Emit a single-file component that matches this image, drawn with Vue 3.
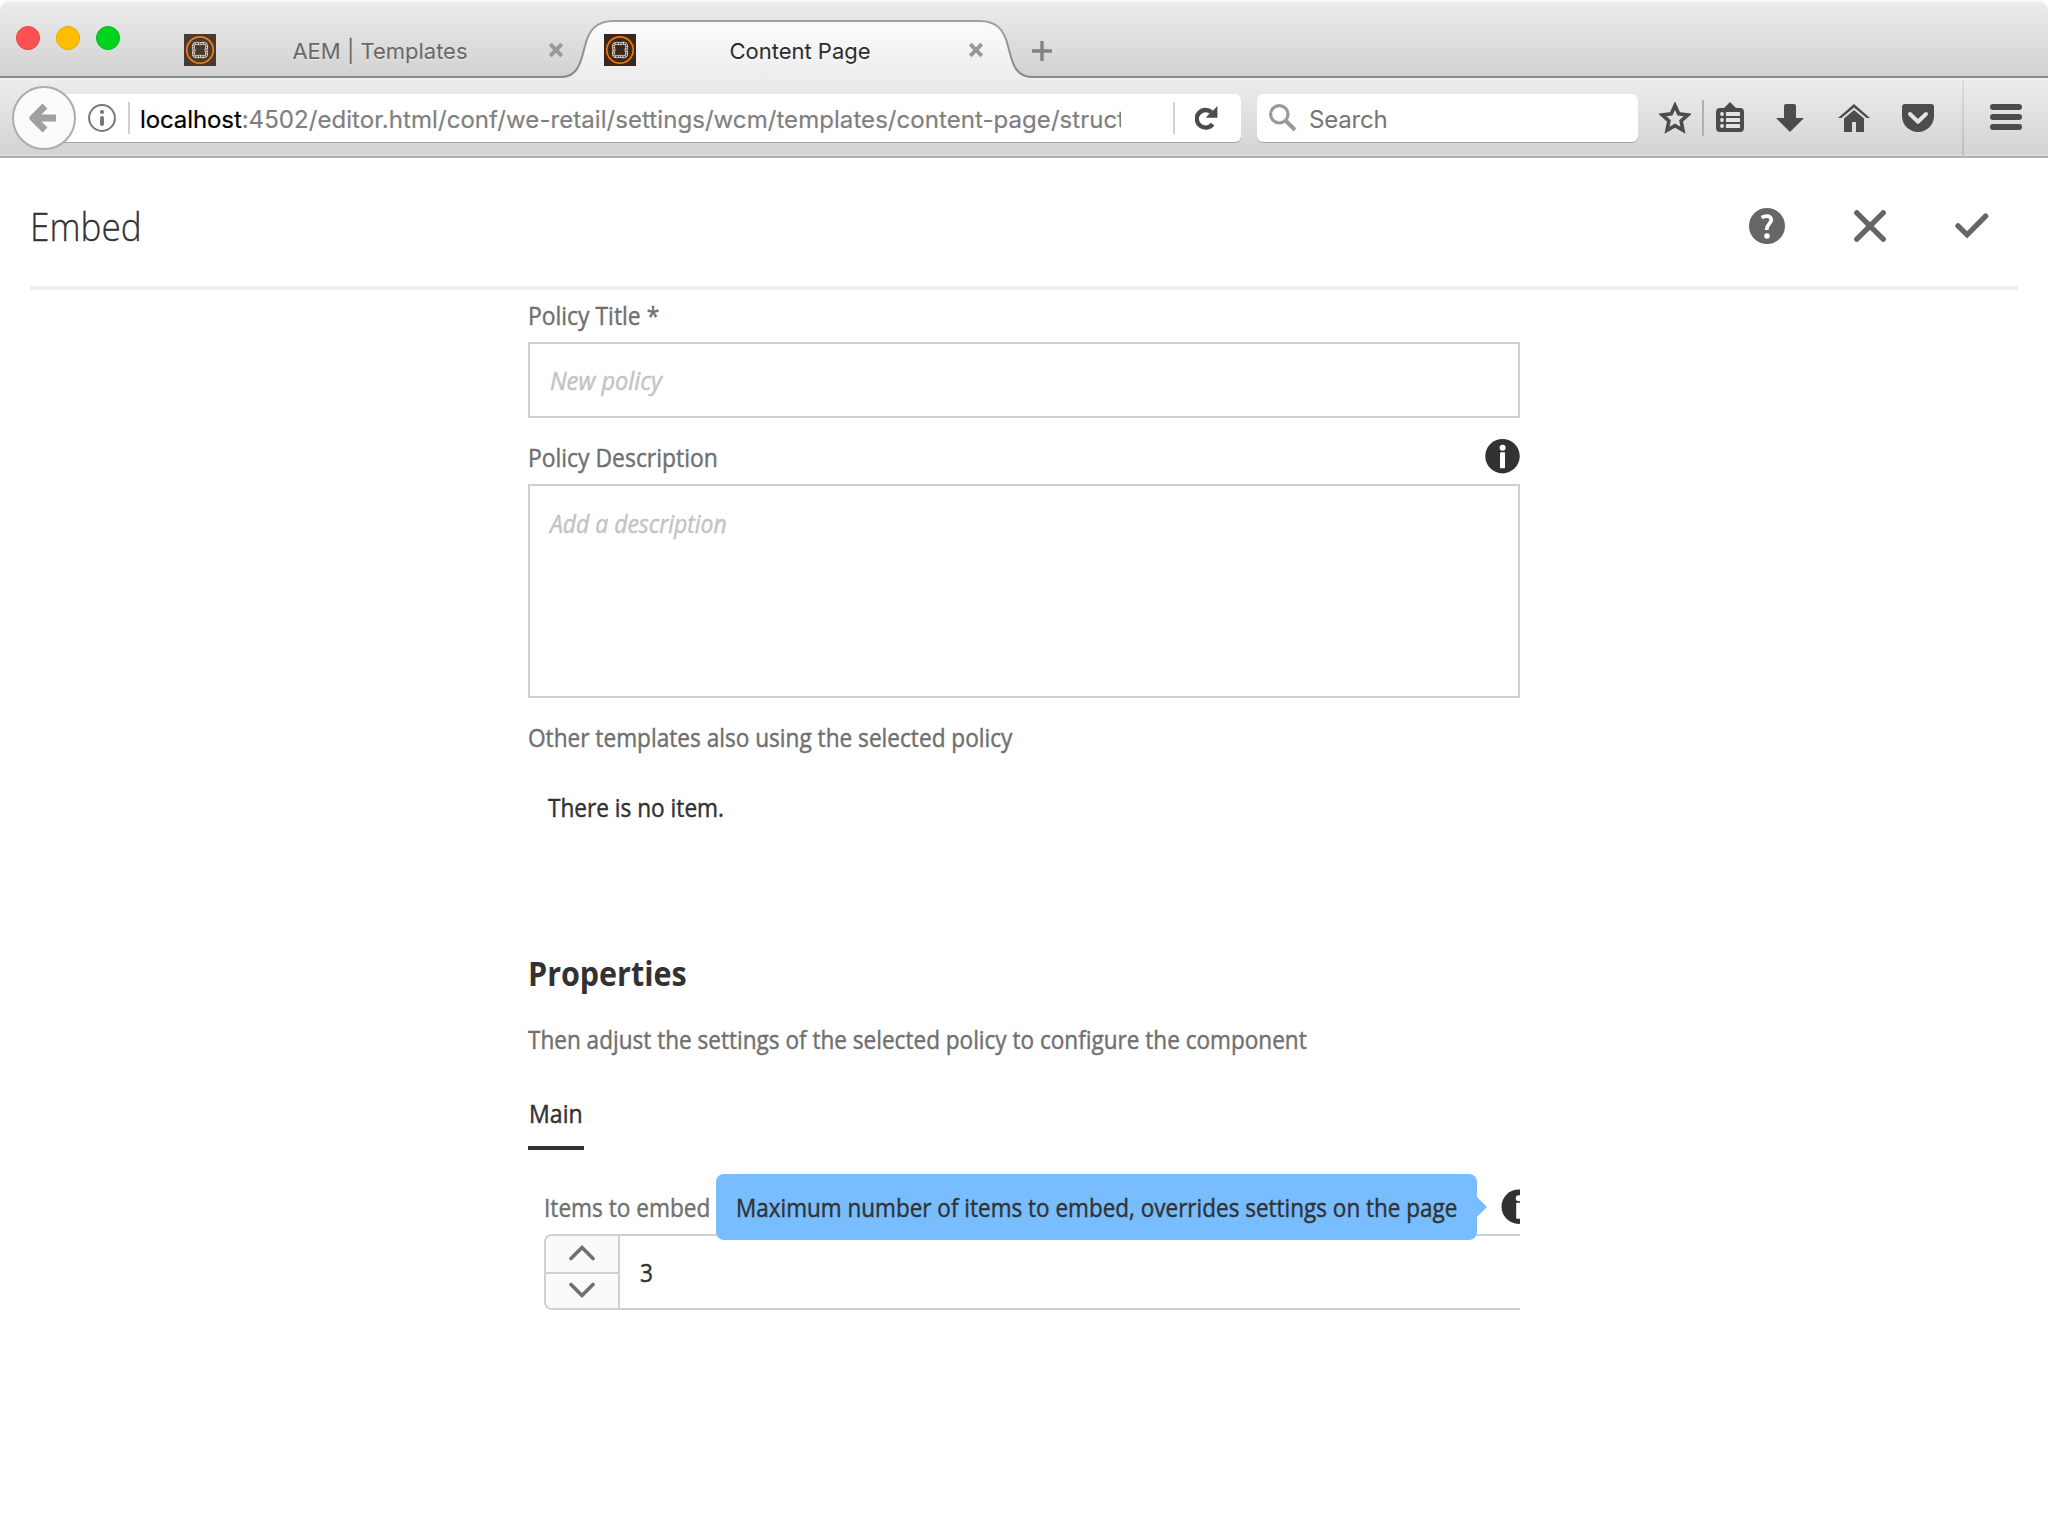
<script setup>
const tabs = [
  { title: 'AEM | Templates', active: false },
  { title: 'Content Page', active: true },
]
const url = {
  host: 'localhost',
  path: ':4502/editor.html/conf/we-retail/settings/wcm/templates/content-page/struct',
}
</script>

<template>
  <div class="window">
    <div class="tabbar">
      <div class="lights">
        <i class="light close-light"></i>
        <i class="light min-light"></i>
        <i class="light max-light"></i>
      </div>
      <div v-for="tab in tabs" :key="tab.title" class="tab" :class="{ active: tab.active }">
        <svg v-if="tab.active" class="tab-shape" width="471" height="60" viewBox="0 20 471 60">
          <defs>
            <linearGradient id="tabFill" x1="0" y1="0" x2="0" y2="1">
              <stop offset="0" stop-color="#fcfcfc" />
              <stop offset="1" stop-color="#ececec" />
            </linearGradient>
            <linearGradient id="tabEdge" x1="0" y1="0" x2="0" y2="1">
              <stop offset="0" stop-color="#a0a0a0" />
              <stop offset="1" stop-color="#858585" />
            </linearGradient>
          </defs>
          <path d="M0 80V77C18 77 20 60 24 46C28 29 36 21 53 21H418C435 21 443 29 447 46C451 60 453 77 471 77V80Z" fill="url(#tabFill)" />
          <path d="M0 77C18 77 20 60 24 46C28 29 36 21 53 21H418C435 21 443 29 447 46C451 60 453 77 471 77" fill="none" stroke="url(#tabEdge)" stroke-width="2" />
        </svg>
        <svg class="favicon" width="32" height="32" viewBox="0 0 32 32">
          <rect width="32" height="32" fill="#3a281c" />
          <circle cx="16" cy="16" r="13.2" fill="none" stroke="#f47500" stroke-width="1.7" />
          <path d="M12.5 9.2Q16 10.4 19.5 9.2Q23 9.6 22.6 13Q21.4 16 22.6 19Q23 22.4 19.5 22.8Q16 21.6 12.5 22.8Q9 22.4 9.4 19Q10.6 16 9.4 13Q9 9.6 12.5 9.2Z" fill="none" stroke="#e8d8cc" stroke-width="3" stroke-linejoin="round" />
          <path d="M12.5 9.2Q16 10.4 19.5 9.2Q23 9.6 22.6 13Q21.4 16 22.6 19Q23 22.4 19.5 22.8Q16 21.6 12.5 22.8Q9 22.4 9.4 19Q10.6 16 9.4 13Q9 9.6 12.5 9.2Z" fill="none" stroke="#4a382c" stroke-width="1.4" stroke-dasharray="1.6 .9" />
        </svg>
        <span class="tab-title">{{ tab.title }}</span>
        <svg class="tab-close" width="16" height="16" viewBox="0 0 16 16">
          <path d="M2.2 2.2L13.8 13.8M13.8 2.2L2.2 13.8" stroke="#999" stroke-width="4" />
        </svg>
      </div>
      <svg class="new-tab" width="20" height="20" viewBox="0 0 20 20">
        <path d="M10 0V20M0 10H20" stroke="#828282" stroke-width="3.4" />
      </svg>
    </div>

    <div class="toolbar">
      <div class="back">
        <svg width="28" height="30" viewBox="0 0 28 30">
          <path d="M16 3L4 15L16 27M5 15H27" fill="none" stroke="#a0a0a0" stroke-width="7" stroke-linejoin="round" />
        </svg>
      </div>
      <div class="urlbar">
        <svg width="28" height="28" viewBox="0 0 28 28">
          <circle cx="14" cy="14" r="12.9" fill="none" stroke="#777" stroke-width="2" />
          <circle cx="14" cy="8" r="2.1" fill="#777" />
          <rect x="12" y="12" width="4" height="10" rx="2" fill="#777" />
        </svg>
        <i class="field-line first"></i>
        <div class="address"><span class="host">{{ url.host }}</span>{{ url.path }}</div>
        <i class="field-line last"></i>
        <svg class="reload" width="23" height="24" viewBox="0 0 23 24">
          <path d="M17.6 18.2A8.8 8.8 0 1 1 16.6 6.4" fill="none" stroke="#4c4c4c" stroke-width="4.4" />
          <path d="M22.4 0V11.8H10.8L13.5 8.6L16 6.8Z" fill="#4c4c4c" />
        </svg>
      </div>
      <div class="search">
        <svg width="28" height="28" viewBox="0 0 28 28">
          <circle cx="10.3" cy="10.3" r="8.7" fill="none" stroke="#999" stroke-width="3.2" />
          <path d="M16.5 16.5L26 26" stroke="#999" stroke-width="4" />
        </svg>
        <span>Search</span>
      </div>
      <svg class="star" width="32" height="32" viewBox="0 0 32 32">
        <path d="M16 3.6L19.7 11.8L28.8 12.9L22.1 19L24 28.2L16 23.6L8 28.2L9.9 19L3.2 12.9L12.3 11.8Z" fill="none" stroke="#4c4c4c" stroke-width="3.6" />
      </svg>
      <i class="tool-line"></i>
      <svg class="clip" width="28" height="30" viewBox="0 0 28 30">
        <path d="M4 6H8L14 0L20 6H24A4 4 0 0 1 28 10V26A4 4 0 0 1 24 30H4A4 4 0 0 1 0 26V10A4 4 0 0 1 4 6Z" fill="#4c4c4c" />
        <g fill="#e4e4e4">
          <circle cx="6" cy="12" r="1.9" /><circle cx="6" cy="18" r="1.9" /><circle cx="6" cy="24" r="1.9" />
          <rect x="10" y="10" width="14" height="4" rx=".6" /><rect x="10" y="16" width="14" height="4" rx=".6" /><rect x="10" y="22" width="14" height="4" rx=".6" />
        </g>
      </svg>
      <svg class="down" width="28" height="28" viewBox="0 0 28 28">
        <path d="M8 2A2 2 0 0 1 10 0H18A2 2 0 0 1 20 2V14H28L14 28L0 14H8Z" fill="#4c4c4c" />
      </svg>
      <svg class="home" width="32" height="28" viewBox="0 0 32 28">
        <path d="M16 0L32 14H28.6L16 3.6L3.4 14H0Z" fill="#4c4c4c" />
        <path d="M16 6L26 14.6V28H18V18H14V28H6V14.6Z" fill="#4c4c4c" />
      </svg>
      <svg class="pocket" width="32" height="28" viewBox="0 0 32 28">
        <path d="M3 0H29A3 3 0 0 1 32 3V12A16 16 0 0 1 0 12V3A3 3 0 0 1 3 0Z" fill="#4c4c4c" />
        <path d="M8 10L16 17.7L24 10" fill="none" stroke="#e4e4e4" stroke-width="4" stroke-linecap="round" stroke-linejoin="round" />
      </svg>
      <i class="menu-line"></i>
      <svg class="menu" width="32" height="26" viewBox="0 0 32 26">
        <g fill="#4c4c4c">
          <rect width="32" height="6" rx="3" /><rect y="10" width="32" height="6" rx="3" /><rect y="20" width="32" height="6" rx="3" />
        </g>
      </svg>
    </div>

    <header class="page-header">
      <h1><span>Embed</span></h1>
      <div class="actions">
        <svg width="36" height="36" viewBox="0 0 36 36">
          <circle cx="18" cy="18" r="18" fill="#666" />
          <path d="M12.6 9.6Q15 8.2 17.8 8.2C20.4 8.2 22.3 9.6 22.3 12C22.3 15.8 17.4 16.2 17.6 22" fill="none" stroke="#fff" stroke-width="3.7" />
          <circle cx="18" cy="28" r="2.8" fill="#fff" />
        </svg>
        <svg width="32" height="32" viewBox="0 0 32 32">
          <path d="M2.8 2.8L29.2 29.2M29.2 2.8L2.8 29.2" stroke="#666" stroke-width="5.4" stroke-linecap="round" />
        </svg>
        <svg width="34" height="26" viewBox="0 0 34 26">
          <path d="M3 12.8L12.1 21.8L30.6 3.2" fill="none" stroke="#666" stroke-width="5.4" stroke-linecap="round" />
        </svg>
      </div>
    </header>

    <main class="form">
      <div class="label title-label"><span class="t label-fit">Policy Title *</span></div>
      <div class="input"><span class="t placeholder">New policy</span></div>
      <div class="desc-row">
        <span class="t label-fit">Policy Description</span>
        <svg width="35" height="35" viewBox="0 0 35 35">
          <circle cx="17.5" cy="17.2" r="17.2" fill="#323232" />
          <circle cx="17.6" cy="8.7" r="3" fill="#fff" />
          <rect x="15" y="13.2" width="5" height="16" rx=".8" fill="#fff" />
        </svg>
      </div>
      <div class="textarea"><span class="t placeholder">Add a description</span></div>
      <div class="label others"><span class="t">Other templates also using the selected policy</span></div>
      <div class="no-item"><span class="t">There is no item.</span></div>
      <h2><span>Properties</span></h2>
      <div class="label adjust"><span class="t">Then adjust the settings of the selected policy to configure the component</span></div>
      <div class="tabs"><div class="main-tab"><span class="t">Main</span></div></div>
      <section class="panel">
        <div class="items-row">
          <span class="t">Items to embed</span>
          <svg class="cut-info" width="19" height="35" viewBox="0 0 19 35">
            <circle cx="17.7" cy="17.7" r="17.2" fill="#323232" />
            <circle cx="17.8" cy="9.2" r="3" fill="#fff" />
            <rect x="15.2" y="13.7" width="5" height="16" rx=".8" fill="#fff" />
          </svg>
        </div>
        <div class="number">
          <div class="steps">
            <div class="step up">
              <svg width="26" height="16" viewBox="0 0 26 16"><path d="M2 13.6L13 2.6L24 13.6" fill="none" stroke="#707070" stroke-width="3.6" stroke-linecap="round" /></svg>
            </div>
            <div class="step down-step">
              <svg width="26" height="16" viewBox="0 0 26 16"><path d="M2 2.4L13 13.4L24 2.4" fill="none" stroke="#707070" stroke-width="3.6" stroke-linecap="round" /></svg>
            </div>
          </div>
          <span class="t value">3</span>
        </div>
        <div class="tooltip"><span class="t">Maximum number of items to embed, overrides settings on the page</span></div>
      </section>
    </main>
  </div>
</template>

<style>
html, body { background: #fff; overflow: hidden; }
</style>

<style scoped>
* { box-sizing: border-box; }
svg { display: block; flex: none; }
i { display: block; flex: none; }
.window { width: 2048px; height: 1536px; overflow: hidden; background: #fff; font-family: "Open Sans", "Noto Sans", sans-serif; }

/* browser tabs */
.tabbar {
  display: flex; align-items: center; height: 78px; padding: 22px 0 0 16px;
  background: linear-gradient(#ececec, #d2d2d2); border-bottom: 2px solid #8a8a8a;
  box-shadow: inset 0 2px #f6f6f6; border-radius: 9px 9px 0 0;
  font-family: Inter, sans-serif; font-size: 22px;
}
.lights { display: flex; gap: 16px; margin: 0 64px 22px 0; }
.light { width: 24px; height: 24px; border-radius: 50%; }
.close-light { background: #ff5052; border: 1px solid #e8423f; }
.min-light { background: #ffbf00; border: 1px solid #e5a800; }
.max-light { background: #00d31b; border: 1px solid #06b51b; }
.tab { position: relative; display: flex; align-items: center; width: 380px; height: 54px; padding-top: 2px; color: #686868; }
.tab.active { margin-left: 40px; color: #2c2c2c; z-index: 1; }
.tab-shape { position: absolute; left: -43px; top: -2px; }
.favicon { position: relative; opacity: .9; }
.active .favicon { opacity: 1; }
.tab-title { position: relative; flex: 1; padding: 1px 4px 0 0; text-align: center; white-space: nowrap; line-height: 28px; text-shadow: 0 1px rgba(255, 255, 255, .5); }
.tab-close { position: relative; }
.new-tab { margin: 3px 0 0 48px; }

/* navigation toolbar */
.toolbar {
  display: flex; align-items: center; height: 80px; padding-left: 12px;
  background: linear-gradient(#ededed, #d2d2d2);
  box-shadow: inset 0 -2px #b0b0b0, inset 0 -4px #dcdcdc, inset 0 2px #f4f4f4;
  font-family: Inter, sans-serif; font-size: 24px;
}
.back { position: relative; z-index: 1; display: flex; align-items: center; width: 64px; height: 64px; padding-left: 15px; border: 2px solid #acacac; border-radius: 50%; background: #fbfbfb; }
.urlbar { display: flex; align-items: center; width: 1197px; height: 48px; margin-left: -32px; padding: 0 23px 0 44px; background: #fff; border-radius: 6px; box-shadow: 0 1px #a6a6a6; }
.field-line { width: 2px; height: 32px; background: #d0d0d0; }
.first { margin: 0 10px 0 12px; }
.last { margin-left: auto; }
.address { width: 981px; overflow: hidden; white-space: nowrap; line-height: 36px; padding-top: 3px; letter-spacing: .06px; color: #7f7f7f; -webkit-text-stroke: .2px; }
.host { color: #000; letter-spacing: -.1px; }
.reload { margin-left: 20px; }
.search { display: flex; align-items: center; gap: 12px; width: 381px; height: 48px; margin-left: 16px; padding-left: 12px; background: #fff; border-radius: 6px; box-shadow: 0 1px #a6a6a6; color: #757575; }
.search span { padding-top: 2px; letter-spacing: -.2px; }
.star { margin-left: 21px; }
.tool-line { width: 2px; height: 36px; margin: 0 12px 0 11px; background: #b0b0b0; }
.clip { margin-top: -2px; }
.down { margin-left: 32px; }
.home { margin-left: 34px; }
.pocket { margin-left: 32px; }
.menu-line { width: 2px; height: 78px; margin: 0 26px 0 28px; background: linear-gradient(#dedede, #bcbcbc); }
.menu { margin-top: -2px; }

/* dialog header */
.page-header { display: flex; align-items: center; justify-content: space-between; height: 132px; margin: 0 30px; padding-top: 8px; border-bottom: 4px solid #f0f0f0; }
h1 { margin: 0; font-size: 38px; font-weight: 300; line-height: 46px; color: #323232; }
h1 span { display: inline-block; margin: -1px 0 1px; transform: scaleX(.925); transform-origin: left; -webkit-text-stroke: .3px; }
.actions { display: flex; align-items: center; gap: 69px; padding-right: 29px; }

/* policy form */
.form { width: 992px; margin: 0 auto; padding-top: 10px; font-size: 25px; line-height: 30px; color: #323232; }
.t { display: inline-block; white-space: nowrap; transform: scaleX(.905); transform-origin: left; -webkit-text-stroke: .45px; }
.label { color: #707070; height: 30px; }
.label-fit { transform: scaleX(.916); }
.input, .textarea { border: 2px solid #d0d0d0; padding-left: 20px; }
.input { display: flex; align-items: center; height: 76px; margin-top: 12px; }
.placeholder { font-style: italic; color: #c3c3c3; transform: scaleX(.917); }
.input .placeholder { transform: scaleX(.945); }
.desc-row { display: flex; justify-content: space-between; height: 36px; margin-top: 21px; line-height: 36px; color: #707070; }
.textarea { height: 214px; margin-top: 9px; padding-top: 22px; }
.others { margin-top: 24px; }
.no-item { height: 30px; margin-top: 40px; padding-left: 20px; }
h2 { height: 40px; margin: 131px 0 0; font-size: 34px; font-weight: 700; line-height: 40px; }
h2 span { display: inline-block; transform: scaleX(.896); transform-origin: left; }
.adjust { margin-top: 31px; }
.adjust .t { transform: scaleX(.9023); }
.tabs { display: flex; margin-top: 44px; }
.main-tab { width: 56px; height: 52px; border-bottom: 4px solid #323232; }
.main-tab .t { margin-left: 1px; transform: scaleX(.925); }
.panel { position: relative; padding-left: 16px; padding-top: 39px; }
.items-row { display: flex; justify-content: space-between; height: 36px; line-height: 36px; color: #707070; }
.number { display: flex; align-items: center; height: 76px; margin-top: 9px; border: 2px solid #d0d0d0; border-right: 0; border-radius: 8px 0 0 8px; }
.steps { width: 74px; height: 72px; border-right: 2px solid #d0d0d0; background: #fafafa; border-radius: 6px 0 0 6px; }
.step { display: flex; align-items: center; justify-content: center; height: 34px; }
.step.up { height: 38px; padding-bottom: 2px; border-bottom: 2px solid #d0d0d0; }
.down-step { padding-bottom: 2px; }
.value { margin-left: 20px; }
.tooltip { position: absolute; left: 188px; top: 24px; width: 761px; height: 66px; padding: 18px 0 0 20px; border-radius: 8px; background: #78bdff; }
.tooltip .t { transform: scaleX(.9); }
.tooltip::after { content: ""; position: absolute; left: 100%; top: 23px; border: 10px solid transparent; border-left-color: #78bdff; border-right: 0; }
</style>
